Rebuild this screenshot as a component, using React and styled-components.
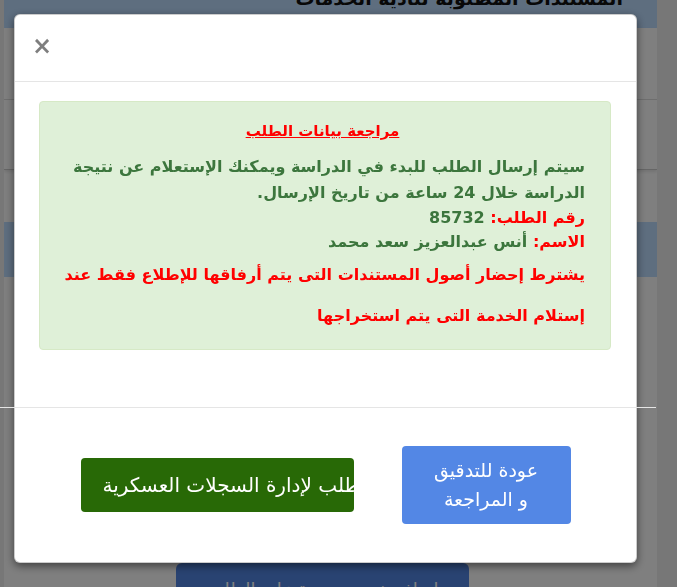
import styled, { createGlobalStyle } from "styled-components";

const GlobalStyle = createGlobalStyle`
  html, body {
    margin: 0;
    padding: 0;
    background: #eeeeee;
    font-family: "DejaVu Sans", "Noto Sans", sans-serif;
  }
  * {
    box-sizing: border-box;
  }
`;

// page behind the dialog
const Page = styled.div`
  direction: rtl;
  width: 653px;
  margin-left: 4px;
  background: #fff;
  height: 587px;
  overflow: hidden;
`;

const TopBar = styled.div`
  height: 28px;
  overflow: hidden;
  background: #bcdcff;
  padding: 0 34px 0 0;
  color: #111;
  font-size: 19px;
  font-weight: bold;
  line-height: 20px;
`;

const TopBarText = styled.div`
  margin-top: -12px;
`;

const Panel = styled.div`
  height: 142px;
  border-bottom: 1px solid #ccc;
  box-shadow: 0 2px 3px rgba(0, 0, 0, 0.1);
`;

const PanelRow = styled.div`
  height: 72px;
  border-bottom: 1px solid #ddd;
`;

const Stripe = styled.div`
  margin-top: 52px;
  height: 55px;
  background: #bcdcff;
`;

const PageActions = styled.div`
  display: flex;
  justify-content: flex-start;
  padding: 286px 188px 0 0;
`;

const PageButton = styled.div`
  width: 293px;
  height: 50px;
  border-radius: 6px;
  background: #5387e5;
  color: #fff;
  font-size: 18px;
  text-align: center;
  padding-top: 16px;
`;

const Backdrop = styled.div`
  position: fixed;
  inset: 0;
  background: rgba(0, 0, 0, 0.5);
`;

// dialog
const Modal = styled.div`
  position: fixed;
  top: 14px;
  left: 14px;
  width: 623px;
  height: 549px;
  background: #fff;
  border: 1px solid rgba(0, 0, 0, 0.2);
  border-radius: 6px;
  box-shadow: 0 3px 9px rgba(0, 0, 0, 0.5);
  direction: rtl;
  display: flex;
  flex-direction: column;
`;

const Header = styled.div`
  height: 67px;
  border-bottom: 1px solid #e5e5e5;
  display: flex;
  align-items: center;
  justify-content: flex-end;
  padding: 0 17px;
`;

const Close = styled.button`
  background: none;
  border: 0;
  padding: 0;
  font-family: "DejaVu Sans", sans-serif;
  font-size: 24px;
  font-weight: bold;
  line-height: 1;
  color: #000;
  opacity: 0.5;
  cursor: pointer;
  margin-top: -4px;
`;

const Body = styled.div`
  padding: 19px 25px 0 24px;
  height: 325px;
`;

const Alert = styled.div`
  background: #dff0d8;
  border: 1px solid #d6e9c6;
  border-radius: 4px;
  color: #3c763d;
  padding: 14px 25px 0 20px;
  height: 249px;
  font-weight: bold;
`;

const AlertTitle = styled.div`
  text-align: center;
  color: #ff0000;
  font-size: 15px;
  text-decoration: underline;
  line-height: 30px;
`;

const Text = styled.p`
  margin: 8px 0 0;
  font-size: 16px;
  line-height: 26px;
`;

const Field = styled.div`
  font-size: 16px;
  line-height: 24px;
`;

const Label = styled.span`
  color: #ff0000;
`;

const Warning = styled.p`
  margin: 0;
  color: #ff0000;
  font-size: 16px;
  line-height: 41px;
`;

const Divider = styled.hr`
  margin: 0 -20px 0 -15px;
  border: 0;
  border-top: 1px solid #e5e5e5;
`;

const Footer = styled.div`
  flex: 1;
  display: flex;
  align-items: center;
  justify-content: center;
  gap: 48px;
`;

const Button = styled.button`
  border: 0;
  border-radius: 4px;
  color: #fff;
  font-family: "DejaVu Sans", sans-serif;
  cursor: pointer;
  background: ${(p) => (p.$variant === "green" ? "#286906" : "#5387e5")};
`;

const BackButton = styled(Button)`
  width: 169px;
  height: 78px;
  font-size: 19px;
  line-height: 29px;
  padding: 0 10px;
`;

const SendButton = styled(Button)`
  width: 273px;
  height: 54px;
  direction: ltr;
  text-align: left;
  white-space: nowrap;
  overflow: hidden;
  padding: 0 0 0 22px;
  font-size: 20px;
`;

export default function App() {
  return (
    <>
      <GlobalStyle />
      <Page>
        <TopBar>
          <TopBarText>المستندات المطلوبة لتأدية الخدمات</TopBarText>
        </TopBar>
        <Panel>
          <PanelRow />
        </Panel>
        <Stripe />
        <PageActions>
          <PageButton>إضافة خدمة جديدة على الطلب</PageButton>
        </PageActions>
      </Page>
      <Backdrop />
      <Modal>
        <Header>
          <Close aria-label="Close">×</Close>
        </Header>
        <Body>
          <Alert>
            <AlertTitle>مراجعة بيانات الطلب</AlertTitle>
            <Text>
              سيتم إرسال الطلب للبدء في الدراسة ويمكنك الإستعلام عن نتيجة
              الدراسة خلال 24 ساعة من تاريخ الإرسال.
            </Text>
            <Field>
              <Label>رقم الطلب: </Label>85732
            </Field>
            <Field>
              <Label>الاسم: </Label>أنس عبدالعزيز سعد محمد
            </Field>
            <Warning>
              يشترط إحضار أصول المستندات التى يتم أرفاقها للإطلاع فقط عند
              <br />
              إستلام الخدمة التى يتم استخراجها
            </Warning>
          </Alert>
        </Body>
        <Divider />
        <Footer>
          <BackButton>
            عودة للتدقيق
            <br />و المراجعة
          </BackButton>
          <SendButton $variant="green">
            إرسال الطلب لإدارة السجلات العسكرية
          </SendButton>
        </Footer>
      </Modal>
    </>
  );
}
